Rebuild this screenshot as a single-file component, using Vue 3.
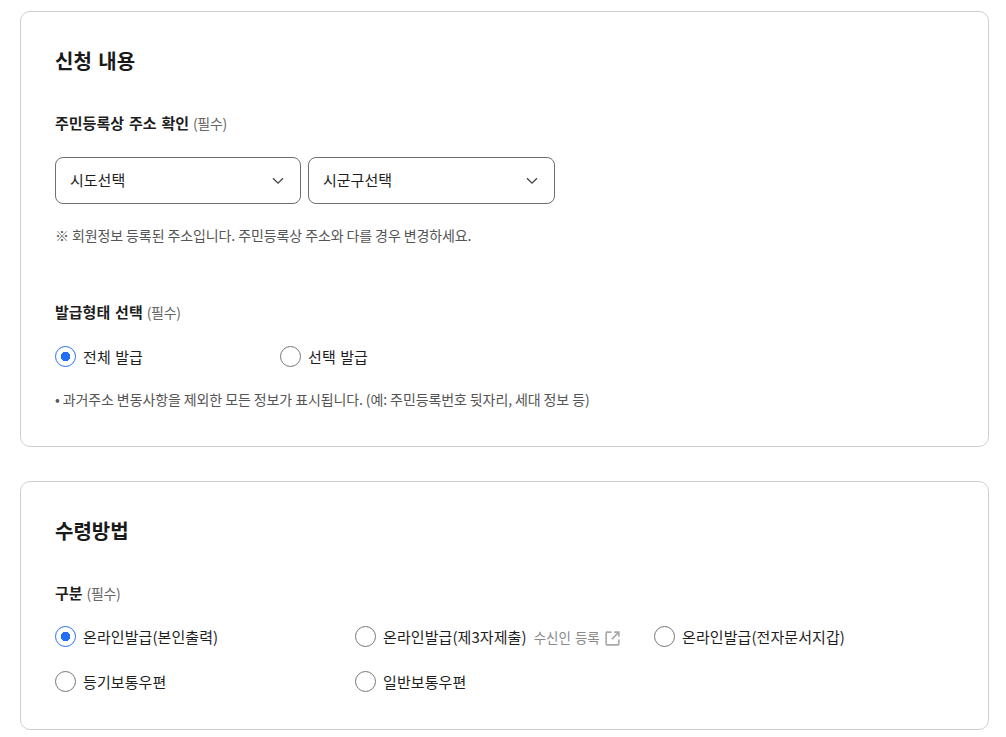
<script setup>
const kinds = [
  { label: '전체 발급', on: true },
  { label: '선택 발급', on: false }
]
const methods = [
  { label: '온라인발급(본인출력)', on: true },
  { label: '온라인발급(제3자제출)', on: false, link: '수신인 등록' },
  { label: '온라인발급(전자문서지갑)', on: false },
  { label: '등기보통우편', on: false },
  { label: '일반보통우편', on: false }
]
</script>

<template>
  <main class="page">
    <section class="card first">
      <h2>신청 내용</h2>
      <p class="field-title">주민등록상 주소 확인 <span>(필수)</span></p>
      <div class="selects">
        <div class="select">
          <span>시도선택</span>
          <svg width="12" height="8" viewBox="0 0 12 8"><path d="M1 1.2 6 6.2 11 1.2" fill="none" stroke="#444" stroke-width="1.3" /></svg>
        </div>
        <div class="select">
          <span>시군구선택</span>
          <svg width="12" height="8" viewBox="0 0 12 8"><path d="M1 1.2 6 6.2 11 1.2" fill="none" stroke="#444" stroke-width="1.3" /></svg>
        </div>
      </div>
      <p class="note">※ 회원정보 등록된 주소입니다. 주민등록상 주소와 다를 경우 변경하세요.</p>
      <p class="field-title second">발급형태 선택 <span>(필수)</span></p>
      <div class="kinds">
        <label v-for="item in kinds" :key="item.label" class="radio">
          <i :class="{ on: item.on }"></i>{{ item.label }}
        </label>
      </div>
      <p class="note small">• 과거주소 변동사항을 제외한 모든 정보가 표시됩니다. (예: 주민등록번호 뒷자리, 세대 정보 등)</p>
    </section>

    <section class="card">
      <h2>수령방법</h2>
      <p class="field-title">구분 <span>(필수)</span></p>
      <div class="methods">
        <label v-for="item in methods" :key="item.label" class="radio">
          <i :class="{ on: item.on }"></i>{{ item.label }}
          <a v-if="item.link" class="link">
            {{ item.link }}
            <svg width="17" height="17" viewBox="0 0 16 16" fill="none" stroke="#a8a8a8" stroke-width="1.5">
              <path d="M7 2H2.8a.8.8 0 0 0-.8.8v10.4c0 .4.4.8.8.8h10.4c.4 0 .8-.4.8-.8V9" />
              <path d="M9.6 2H14v4.4M14 2 7.4 8.6" />
            </svg>
          </a>
        </label>
      </div>
    </section>
  </main>
</template>

<style>
body { background: #fff; }
</style>

<style scoped>
.page {
  display: flex;
  flex-direction: column;
  gap: 34px;
  width: 969px;
  padding: 11px 0 0 20px;
  font-family: "Noto Sans CJK KR", "Noto Sans", sans-serif;
  color: #1e1e1e;
}
.card {
  box-sizing: border-box;
  height: 249px;
  padding: 33px 34px 0;
  border: 1px solid #cfcfcf;
  border-radius: 10px;
}
.card.first { height: 436px; }
h2 {
  margin: 0;
  font-size: 20px;
  line-height: 32px;
  font-weight: 700;
  word-spacing: 2px;
  color: #1a1a1a;
}
.field-title {
  margin: 35px 0 0;
  font-size: 15px;
  line-height: 22px;
  font-weight: 700;
  word-spacing: 1.5px;
}
.field-title span {
  margin-left: -1px;
  font-size: 14px;
  font-weight: 400;
  color: #666;
  letter-spacing: -0.3px;
}
.field-title.second { margin-top: 0; }
.selects {
  display: flex;
  gap: 7px;
  margin-top: 23px;
}
.select {
  box-sizing: border-box;
  display: flex;
  align-items: center;
  justify-content: space-between;
  width: 246px;
  height: 47px;
  padding: 0 16px 2px 14px;
  border: 1px solid #6f6f6f;
  border-radius: 8px;
  font-size: 15px;
}
.select svg { margin-top: 2px; }
.select + .select { width: 247px; }
.note {
  margin: 20px 0 55px;
  font-size: 14px;
  line-height: 22px;
  letter-spacing: -0.1px;
  color: #555;
}
.note.small { margin: 21px 0 0; }
.kinds {
  display: flex;
  margin-top: 22px;
}
.kinds .radio { width: 225px; }
.methods {
  display: grid;
  grid-template-columns: 300px 299px 1fr;
  row-gap: 23px;
  margin-top: 21px;
}
.radio {
  display: flex;
  align-items: center;
  height: 22px;
  font-size: 15px;
  white-space: nowrap;
  word-spacing: 1px;
  letter-spacing: 0.08px;
}
.radio i {
  box-sizing: border-box;
  flex: none;
  width: 21px;
  height: 21px;
  margin-right: 7px;
  border: 1px solid #767676;
  border-radius: 50%;
}
.radio i.on {
  border: 1.5px solid #256ef4;
  background: radial-gradient(circle, #256ef4 0 4.5px, #fff 5px);
}
.link {
  display: flex;
  align-items: center;
  gap: 4px;
  margin: 2px 0 0 7px;
  font-size: 13.5px;
  letter-spacing: 0;
  color: #8a8a8a;
}
.link svg { margin-top: 2px; }
</style>
